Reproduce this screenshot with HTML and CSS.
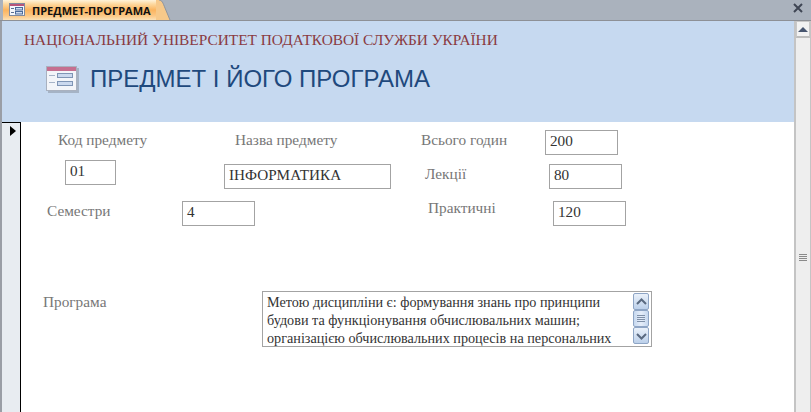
FILE: index.html
```html
<!DOCTYPE html>
<html lang="uk">
<head>
<meta charset="utf-8">
<title>ПРЕДМЕТ-ПРОГРАМА</title>
<link rel="stylesheet" href="styles.css">
</head>
<body>
<div class="tabbar">
  <div class="tab">
    <svg class="tab-icon" width="17" height="14" viewBox="0 0 17 14">
      <rect x="0.5" y="0.5" width="15" height="12" fill="#f4f6fa" stroke="#7f8ba0"/>
      <rect x="1" y="1" width="14" height="2" fill="#b8557a"/>
      <path d="M2 5.5h3M2 9.5h3" stroke="#5a6f90"/>
      <rect x="6.5" y="4.5" width="7" height="2.5" fill="#cfdcf0" stroke="#4a6a9a"/>
      <rect x="6.5" y="8.5" width="7" height="2.5" fill="#cfdcf0" stroke="#4a6a9a"/>
    </svg>
    <span class="tab-label">ПРЕДМЕТ-ПРОГРАМА</span>
  </div>
  <svg class="tab-curve" width="16" height="20" viewBox="0 0 16 20">
    <path d="M0 0 H3 C6 0 7 3 9 8 L14 20 H0 Z" fill="#f7c98a"/>
    <path d="M3 0 C6 0 7 3 9 8 L14 20" fill="none" stroke="#8f949c"/>
  </svg>
  <svg class="close" width="10" height="10" viewBox="0 0 10 10">
    <path d="M1 1 L9 9 M9 1 L1 9" stroke="#3f4654" stroke-width="2"/>
  </svg>
</div>
<div class="main">
  <div class="document">
    <header class="form-header">
      <div class="org">НАЦІОНАЛЬНИЙ УНІВЕРСИТЕТ ПОДАТКОВОЇ СЛУЖБИ УКРАЇНИ</div>
      <div class="title-row">
        <svg class="form-icon" width="33" height="27" viewBox="0 0 33 27">
          <rect x="2" y="2" width="31" height="25" fill="#8a94a3" opacity="0.55"/>
          <rect x="0.5" y="0.5" width="30" height="24" fill="#f3f5f9" stroke="#a9b1bf"/>
          <rect x="1" y="1" width="29" height="4" fill="#c56f90"/>
          <path d="M3 9.5h6M3 16.5h6" stroke="#a7b4c8"/>
          <rect x="11.5" y="7.5" width="15" height="4" fill="#cbd9ee" stroke="#7f95b5"/>
          <rect x="11.5" y="15.5" width="15" height="4" fill="#cbd9ee" stroke="#7f95b5"/>
        </svg>
        <h1 class="title">ПРЕДМЕТ І ЙОГО ПРОГРАМА</h1>
      </div>
    </header>
    <div class="detail">
      <div class="selector"><span class="selector-arrow"></span></div>
      <div class="canvas">
        <label class="label l-code">Код предмету</label>
        <div class="field f-code">01</div>
        <label class="label l-name">Назва предмету</label>
        <div class="field f-name">ІНФОРМАТИКА</div>
        <label class="label l-total">Всього годин</label>
        <div class="field f-total">200</div>
        <label class="label l-lect">Лекції</label>
        <div class="field f-lect">80</div>
        <label class="label l-sem">Семестри</label>
        <div class="field f-sem">4</div>
        <label class="label l-prac">Практичні</label>
        <div class="field f-prac">120</div>
        <label class="label l-prog">Програма</label>
        <div class="field memo">
          <div class="memo-text">Метою дисципліни є: формування знань про принципи будови та функціонування обчислювальних машин; організацією обчислювальних процесів на персональних</div>
          <div class="memo-scroll">
            <div class="mini-btn">
              <svg width="11" height="8" viewBox="0 0 11 8"><path d="M1 6 L5.5 1.5 L10 6" fill="none" stroke="#5a6a80" stroke-width="2"/></svg>
            </div>
            <div class="mini-btn mini-thumb">
              <svg width="8" height="8" viewBox="0 0 8 8"><path d="M0 .5h8M0 2.5h8M0 4.5h8M0 6.5h8" stroke="#7f90a8"/></svg>
            </div>
            <div class="mini-btn">
              <svg width="11" height="8" viewBox="0 0 11 8"><path d="M1 2 L5.5 6.5 L10 2" fill="none" stroke="#5a6a80" stroke-width="2"/></svg>
            </div>
          </div>
        </div>
      </div>
    </div>
  </div>
  <div class="scrollbar">
    <div class="scroll-btn"><span class="up-arrow"></span></div>
    <div class="scroll-grip"><i></i><i></i><i></i><i></i></div>
  </div>
</div>
</body>
</html>
```
FILE: styles.css
```css
* { box-sizing: border-box; }
html, body { margin: 0; height: 100%; }
body {
  width: 811px;
  height: 412px;
  overflow: hidden;
  background: #fff;
  font-family: "Liberation Serif", serif;
  display: flex;
  flex-direction: column;
}
.tabbar {
  height: 21px;
  flex: none;
  display: flex;
  align-items: flex-start;
  background: #aab2bd;
  border-bottom: 1px solid #8d9096;
  padding-left: 3px;
  position: relative;
}
.tab {
  height: 20px;
  width: 153px;
  display: flex;
  align-items: center;
  gap: 6px;
  padding-left: 6px;
  background: linear-gradient(#fff3d9 0, #fdd9a0 20%, #fbb45e 50%, #fcc987 80%, #fbe2b8 100%);
}
.tab-icon { flex: none; margin-top: -1px; }
.tab-label {
  font: bold 11px "Open Sans", "Liberation Sans", sans-serif;
  color: #111;
  white-space: nowrap;
}
.tab-curve { flex: none; }
.close { position: absolute; right: 8px; top: 3px; }
.main {
  flex: 1;
  display: flex;
  min-height: 0;
  padding-left: 2px;
  background: linear-gradient(90deg, #9a9ea6 0, #9a9ea6 2px, transparent 2px);
}
.document {
  flex: 1;
  min-width: 0;
  display: flex;
  flex-direction: column;
}
.form-header {
  height: 101px;
  flex: none;
  background: #c6d9f0;
  padding: 9px 0 0 22px;
}
.org {
  font-size: 15.36px;
  line-height: 20px;
  color: #8a3b42;
  white-space: nowrap;
}
.title-row {
  display: flex;
  align-items: center;
  gap: 11px;
  margin: 11px 0 0 22px;
}
.form-icon { flex: none; }
.title {
  margin: 0;
  font: 400 24px/36px "Liberation Sans", sans-serif;
  color: #1f497d;
  white-space: nowrap;
}
.detail { flex: 1; display: flex; min-height: 0; }
.selector {
  width: 19px;
  flex: none;
  background: #e8ecf1;
  border-top: 1px solid #000;
  border-right: 1px solid #000;
  padding: 3px 0 0 8px;
}
.selector-arrow {
  display: block;
  width: 0;
  height: 0;
  border-left: 6px solid #000;
  border-top: 5px solid transparent;
  border-bottom: 5px solid transparent;
}
.canvas { flex: 1; position: relative; min-width: 0; }
.label {
  position: absolute;
  font-size: 15.3px;
  line-height: 18px;
  color: #777;
  white-space: nowrap;
}
.field {
  position: absolute;
  width: 73px;
  height: 25px;
  border: 1px solid #a3a3a3;
  background: #fff;
  font-size: 15.2px;
  line-height: 19px;
  padding-left: 4px;
  color: #333;
  white-space: nowrap;
}
.l-code { left: 37px; top: 9px; }
.l-name { left: 214px; top: 9px; }
.l-total { left: 400px; top: 9px; }
.l-lect { left: 404px; top: 43px; }
.l-sem { left: 26px; top: 80px; }
.l-prac { left: 407px; top: 77px; }
.l-prog { left: 22px; top: 171px; }
.f-code { left: 44px; top: 38px; width: 51px; }
.f-name { left: 203px; top: 42px; width: 167px; }
.f-total { left: 524px; top: 8px; }
.f-lect { left: 528px; top: 42px; }
.f-sem { left: 161px; top: 79px; }
.f-prac { left: 532px; top: 79px; }
.memo {
  left: 241px;
  top: 169px;
  width: 390px;
  height: 56px;
  display: flex;
  padding: 0;
  overflow: hidden;
  font-size: 14.2px;
  line-height: 18px;
}
.memo-text {
  width: 369px;
  flex: none;
  padding: 1px 0 0 4px;
  white-space: normal;
  height: 54px;
  overflow: hidden;
}
.memo-scroll {
  width: 17px;
  flex: none;
  margin: 1px 0 0 1px;
  display: flex;
  flex-direction: column;
}
.mini-btn {
  width: 16px;
  height: 17px;
  flex: none;
  border: 1px solid #8ea5c5;
  border-radius: 2px;
  background: linear-gradient(#eaf1fa, #bcd0ea);
  display: flex;
  align-items: center;
  justify-content: center;
}
.mini-thumb { background: linear-gradient(90deg, #c6d8ef, #e6eefa 50%, #c6d8ef); }
.scrollbar {
  width: 17px;
  flex: none;
  background: #eeeeee;
  border-left: 2px solid #c4c4c4;
  border-right: 1px solid #c4c4c4;
  position: relative;
}
.scroll-btn {
  height: 17px;
  background: #f2f2f2;
  border: 1px solid #c8c8c8;
  border-bottom: 2px solid #bdbdbd;
  display: flex;
  align-items: center;
  justify-content: center;
}
.up-arrow {
  width: 0;
  height: 0;
  border-left: 5px solid transparent;
  border-right: 5px solid transparent;
  border-bottom: 5px solid #47556f;
}
.scroll-grip {
  position: absolute;
  left: 3px;
  top: 233px;
  display: flex;
  flex-direction: column;
  gap: 1px;
}
.scroll-grip i { display: block; width: 8px; height: 1px; background: #8a8a8a; }
```
